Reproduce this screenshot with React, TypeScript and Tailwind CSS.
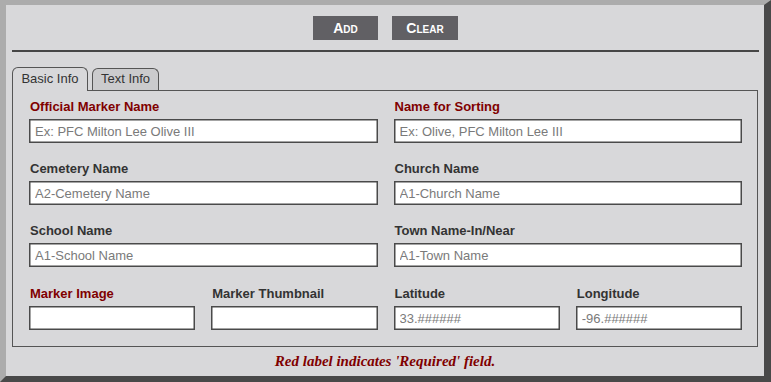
import React from "react";

const Field = ({ label, req, ph }: { label: string; req?: boolean; ph?: string }) => (
  <div className="flex flex-col">
    <label
      className={`text-[13px] leading-[18px] font-bold mb-[3px] ml-px ${req ? "text-[#800000]" : "text-[#333333]"}`}
    >
      {label}
    </label>
    <input
      className="h-6 w-full bg-white border border-[#4a4a4a] shadow-[inset_0_0_0_0.5px_#4a4a4a] px-[5px] text-[13px] text-[#333] placeholder:text-[#7a7a7a] outline-none"
      placeholder={ph}
    />
  </div>
);

export default function App() {
  return (
    <div
      className="w-[771px] h-[382px] bg-[#d8d8da] border-t-[5px] border-l-[6px] border-r-[7px] border-b-[6px] border-t-[#acacac] border-l-[#acacac] border-r-[#494949] border-b-[#494949] flex flex-col"
      style={{ fontFamily: '"Liberation Sans", Arial, sans-serif' }}
    >
      <div className="flex justify-center gap-[14px] pt-[11px] pl-[1px]">
        <button className="w-[65px] h-6 bg-[#616064] text-white font-bold text-[14px] [font-variant:small-caps] leading-none">
          Add
        </button>
        <button className="w-[66px] h-6 bg-[#616064] text-white font-bold text-[14px] [font-variant:small-caps] leading-none">
          Clear
        </button>
      </div>
      <div className="mt-[10px] ml-[6px] mr-[5px] h-[2px] bg-[#464646]" />
      <div className="mt-[15px] ml-[6px] mr-[6px] flex flex-col">
        <div className="flex items-end gap-1 h-[23px]">
          <div className="relative z-10 h-[24px] w-[76px] border border-b-0 border-[#555] rounded-t-[6px] bg-[#d8d8da] text-[13px] text-[#333] flex items-center justify-center pb-[2px] -mb-px">
            Basic Info
          </div>
          <div className="h-[22px] w-[67px] border border-b-0 border-[#555] rounded-t-[6px] bg-[#cbcbcd] text-[13px] text-[#333] flex items-center justify-center pb-[1px]">
            Text Info
          </div>
        </div>
        <div className="border border-[#555] pt-[7px] pl-4 pr-[15px] pb-4">
          <div className="grid grid-cols-2 gap-x-4 gap-y-[17px]">
            <Field label="Official Marker Name" req ph="Ex: PFC Milton Lee Olive III" />
            <Field label="Name for Sorting" req ph="Ex: Olive, PFC Milton Lee III" />
            <Field label="Cemetery Name" ph="A2-Cemetery Name" />
            <Field label="Church Name" ph="A1-Church Name" />
            <Field label="School Name" ph="A1-School Name" />
            <Field label="Town Name-In/Near" ph="A1-Town Name" />
            <div className="col-span-2 grid grid-cols-4 gap-x-4 pt-px">
              <Field label="Marker Image" req />
              <Field label="Marker Thumbnail" />
              <Field label="Latitude" ph="33.######" />
              <Field label="Longitude" ph="-96.######" />
            </div>
          </div>
        </div>
      </div>
      <div
        className="flex-1 flex items-center justify-center text-[15px] font-bold italic text-[#800000] pb-[1px]"
        style={{ fontFamily: '"Liberation Serif", "Times New Roman", serif' }}
      >
        Red label indicates 'Required' field.
      </div>
    </div>
  );
}
